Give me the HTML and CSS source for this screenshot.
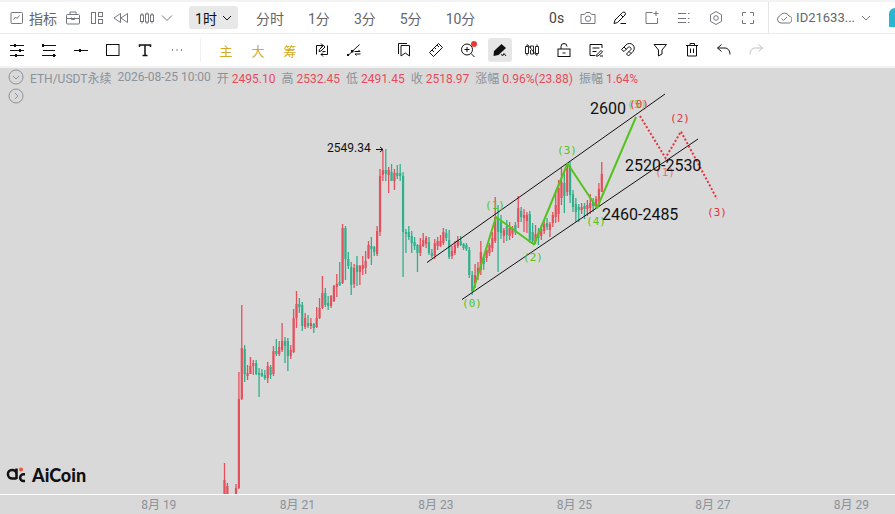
FILE: index.html
```html
<!DOCTYPE html>
<html lang="zh-CN">
<head>
<meta charset="utf-8">
<meta name="viewport" content="width=device-width, initial-scale=1">
<title>ETH/USDT永续 - AiCoin</title>
<link rel="stylesheet" href="styles.css">
</head>
<body>
<header class="bar top-bar">
  <button class="indicator"><svg class="icon grey" viewBox="0 0 16 16"><rect x="2" y="2.5" width="11.5" height="11" rx="1"/><path d="M4.5 9.5l2-2.500 1.500 1.500 2.500-3"/></svg>指标</button>
  <button class="cell small" aria-label="工具箱"><svg class="icon grey" viewBox="0 0 16 16"><rect x="1.500" y="4.500" width="13" height="9.500" rx="1"/><path d="M5 4.500v-2.500h6v2.500M1.500 8.500h13M6.500 7.500v2h3v-2"/></svg></button>
  <button class="cell small" aria-label="布局"><svg class="icon grey" viewBox="0 0 16 16"><rect x="2.500" y="2.500" width="4" height="11"/><rect x="9.500" y="2.500" width="4" height="4"/><rect x="9.500" y="9.500" width="4" height="4"/></svg></button>
  <button class="cell small" aria-label="回放"><svg class="icon grey" viewBox="0 0 16 16"><path d="M7.500 3.500v9L1 8zM14.500 3.500v9L8 8z"/></svg></button>
  <button class="cell candle-cell" aria-label="K线样式"><svg class="icon grey" viewBox="0 0 16 16"><rect x="1.500" y="5" width="3" height="6.500"/><rect x="6.500" y="4" width="3" height="8"/><rect x="11.500" y="5" width="3" height="6.500"/><path d="M3 3v2M3 11.500v2M8 2.500V4M8 12v2M13 3v2M13 11.500v2"/></svg></button>
  <button class="cell tiny" aria-label="更多样式"><svg class="icon grey" viewBox="0 0 16 16"><path d="M3 5.500l5 5 5-5"/></svg></button>
  <nav class="periods" aria-label="周期">
    <button class="period active">1时<svg class="chevron" viewBox="0 0 10 10"><path d="M1 3l4 4 4-4"/></svg></button>
    <button class="period">分时</button>
    <button class="period">1分</button>
    <button class="period">3分</button>
    <button class="period">5分</button>
    <button class="period">10分</button>
  </nav>
  <div class="actions">
    <span class="countdown">0s</span>
    <button class="cell" aria-label="截图"><svg class="icon grey" viewBox="0 0 16 16"><path d="M1 4.500h3.500L6 2.500h4l1.500 2H15v9H1z"/><circle cx="8" cy="8.700" r="2.700"/></svg></button>
    <button class="cell" aria-label="画线"><svg class="icon dark" viewBox="0 0 16 16"><path d="M2 13.500l1-3.500 7.500-7.500q1.500-1 2.500 0t0 2.500L5.500 12.500zM9 5l2 2M8.500 13.500h5.500"/></svg></button>
    <button class="cell" aria-label="新窗口"><svg class="icon grey" viewBox="0 0 16 16"><path d="M8.500 2.500h-6.500v11h11.500V8M12 1v5M9.500 3.500h5"/></svg></button>
    <button class="cell" aria-label="列表"><svg class="icon grey" viewBox="0 0 16 16"><path d="M2 3.500h8M2 8.500h8M2 12.500h8M12 3.500h1.500M12 8.500h1.500M12 12.500h1.500"/></svg></button>
    <button class="cell" aria-label="设置"><svg class="icon grey" viewBox="0 0 16 16"><path d="M8 1.500l5.500 3.200v6.600L8 14.500l-5.500-3.200V4.700z"/><circle cx="8" cy="8" r="2.300"/></svg></button>
    <button class="cell" aria-label="全屏"><svg class="icon grey" viewBox="0 0 16 16"><path d="M2.500 6V2.500H6M10 2.500h3.500V6M13.500 10v3.500H10M6 13.500H2.500V10"/></svg></button>
  </div>
  <div class="account">
    <button class="account-button"><svg class="icon grey" viewBox="0 0 16 16"><path d="M5 13a3.700 3.700 0 0 1-1-7.200A5 5 0 0 1 13 6a3.500 3.500 0 0 1-1.500 7zM5.500 8.500l2 2 3.500-3.500"/></svg>ID21633...<svg class="chevron grey" viewBox="0 0 10 10"><path d="M1 3l4 4 4-4"/></svg></button>
    <span class="avatar"></span>
  </div>
</header>

<div class="bar draw-bar">
  <div class="tools">
    <button class="cell" aria-label="平行线"><svg class="icon dark" viewBox="0 0 16 16"><path d="M1 3.500h14M1 8.500h14M1 13.500h14"/><path class="fill" d="M5 2h2v3H5zM10 7h2v3h-2zM6 12h2v3H6z"/></svg></button>
    <button class="cell" aria-label="水平线"><svg class="icon dark" viewBox="0 0 16 16"><path d="M1 3.500h14M2 8.500h12M1 13.500h14"/><path class="fill" d="M1 2h2v3H1zM12 12h2v3h-2z"/></svg></button>
    <button class="cell" aria-label="线段"><svg class="icon dark" viewBox="0 0 16 16"><path d="M1 8.500h14"/><path class="fill" d="M6 7h2v3H6z"/></svg></button>
    <button class="cell" aria-label="矩形"><svg class="icon dark" viewBox="0 0 16 16"><rect x="1.500" y="2.500" width="12.500" height="11"/></svg></button>
    <button class="cell" aria-label="文字"><svg class="icon dark bold" viewBox="0 0 16 16"><path d="M2.500 5V3h11v2M8 3v10.500M5.500 13.500h5"/></svg></button>
    <button class="cell" aria-label="更多工具"><svg class="icon dark" viewBox="0 0 16 16"><path class="fill" d="M3 7.500h1v1H3zM7.500 7.500h1v1h-1zM12 7.500h1v1h-1z"/></svg></button>
  </div>
  <div class="tools marks">
    <button class="cell gold">主</button>
    <button class="cell gold">大</button>
    <button class="cell gold">筹</button>
    <button class="cell" aria-label="自动画线"><svg class="icon dark" viewBox="0 0 16 16"><path d="M2.500 12.500V3.500H9M7 1.500l2 2-2 2M13.500 3.500v9H7M9 10.500l-2 2 2 2M5 9.500l.500-2 4-4 1.500 1.500-4 4zM8.500 9.500h3"/></svg></button>
    <button class="cell" aria-label="切换线段"><svg class="icon dark" viewBox="0 0 16 16"><path d="M2 13.500L13.500 2.500M8.500 9.500H14l-1.500-1.500M14.500 12H9l1.500 1.500"/><path class="fill" d="M1 12h2v2H1zM5 8h2.500v2.500H5z"/></svg></button>
  </div>
  <div class="tools">
    <button class="cell" aria-label="书签"><svg class="icon dark" viewBox="0 0 16 16"><path d="M5 3.500h8.500v10.500l-4.200-3-4.300 3zM2.500 12V1.500H11"/></svg></button>
    <button class="cell" aria-label="测量"><svg class="icon dark" viewBox="0 0 16 16"><path d="M1.500 10.500l9-9 4 4-9 9zM4 8l2 2M6.500 5.500l1.500 1.500M9 3l2 2"/></svg></button>
    <button class="cell alert" aria-label="放大"><svg class="icon dark" viewBox="0 0 16 16"><circle cx="7" cy="7.500" r="5.500"/><path d="M11 11.500l3.500 3.500M4.500 7.500h5M7 5v5"/></svg></button>
    <button class="cell selected" aria-label="画笔"><svg class="icon dark" viewBox="0 0 16 16"><path class="fill" d="M2 9l7.500-7L14 6l-7.500 7L1.500 14z"/><path d="M9 12.500l2 1 1-2 2 2.500"/></svg></button>
    <button class="cell" aria-label="隐藏K线"><svg class="icon dark thin" viewBox="0 0 16 16"><path d="M4.500 4.500h-3v7h3zM6.500 6V4h3v8h-3V8M11.500 4.500h3v7h-3zM3 2.500v2M3 11.500v2M13 2.500v2M13 11.500v2M3.500 2.500l9 11"/></svg></button>
    <button class="cell" aria-label="解锁"><svg class="icon dark" viewBox="0 0 16 16"><rect x="2" y="7" width="12" height="7.500"/><path d="M5 7V4.500a3 3 0 0 1 6 0M6.500 11h3"/></svg></button>
    <button class="cell" aria-label="画线管理"><svg class="icon dark" viewBox="0 0 16 16"><path d="M7 13.500H2v-11h12V6M4.500 6h7M4.500 9.500h4M8 13.500l5-5 1.500 1.500-4.500 4H8zM12 14h3"/></svg></button>
    <button class="cell" aria-label="磁吸"><svg class="icon dark" viewBox="0 0 16 16"><path d="M1.500 7.500l4.500-4.500a4.700 4.700 0 0 1 7 6.500l-4.500 4.500-2-2L11 7.500a2 2 0 0 0-2.500-2.500L4 9.500zM4 5l2.500 2.500M9 9.500l2 2"/></svg></button>
    <button class="cell" aria-label="筛选"><svg class="icon dark" viewBox="0 0 16 16"><path d="M2 2.500h12.500L10 8v4l-3.500 2V8z"/></svg></button>
    <button class="cell" aria-label="删除"><svg class="icon dark" viewBox="0 0 16 16"><path d="M2 3.500h12M6 3.500v-2h4.500v2M3.500 3.500v10.500h9V3.500M6.500 6.500v4.500M9.500 6.500v4.500"/></svg></button>
    <button class="cell" aria-label="撤销"><svg class="icon dark" viewBox="0 0 16 16"><path d="M5.500 2.500l-4 3.500 4 3.500M1.500 6H9c3 0 5 3 5 6.500"/></svg></button>
    <button class="cell" aria-label="重做"><svg class="icon pale" viewBox="0 0 16 16"><path d="M10.500 2.500l4 3.500-4 3.500M14.500 6H7c-3 0-5 3-5 6.500"/></svg></button>
  </div>
</div>

<main class="chart">
  <svg class="plot" viewBox="0 68 895 426" role="img" aria-label="ETH/USDT 1小时K线">
    <g id="candles"></g>
    <path class="trend" d="M427 262.500L665 94M462 299.500L698 139"/>
    <path class="wave" d="M473 291L496 217L534 244.500L567.500 163.500L597 208L636 117"/>
    <path class="forecast" d="M640 116L665.500 158L681 131.500L717 199"/>
    <path class="arrow" d="M376 149.500h7M380 147l3 2.500-3 2.500"/>
    <text class="peak" x="327" y="152">2549.34</text>
    <g class="count">
      <text x="472" y="307">(0)</text><text x="495" y="209">(1)</text><text x="533" y="261">(2)</text><text x="567" y="154">(3)</text><text x="596" y="225">(4)</text><text class="faint" x="637" y="108">(5)</text>
    </g>
    <g class="count next">
      <text x="639" y="108">(0)</text><text class="faint" x="665" y="176">(1)</text><text x="680" y="122">(2)</text><text x="717" y="216">(3)</text>
    </g>
    <g class="price">
      <text x="590" y="114">2600</text><text x="625" y="171">2520-2530</text><text x="602" y="220">2460-2485</text>
    </g>
  </svg>
  <div class="legend">
    <div class="legend-row">
      <button class="round" aria-label="收起"><svg viewBox="0 0 16 16"><circle cx="8" cy="8" r="7"/><path d="M5 7l3 3 3-3"/></svg></button>
      <span class="symbol">ETH/USDT永续</span><span class="time">2026-08-25 10:00</span>
      <span>开 <b>2495.10</b></span><span>高 <b>2532.45</b></span><span>低 <b>2491.45</b></span><span>收 <b>2518.97</b></span><span>涨幅 <b>0.96%(23.88)</b></span><span>振幅 <b>1.64%</b></span>
    </div>
    <button class="round" aria-label="展开"><svg viewBox="0 0 16 16"><circle cx="8" cy="8" r="7"/><path d="M7 5l3 3-3 3"/></svg></button>
  </div>
  <div class="brand">
    <svg class="brand-mark" viewBox="0 0 22 18"><path d="M10.500 2.500v10.500M10.500 8a4.300 4.300 0 1 0-4.300 4.500h4.300M19 8.300h-1.500a3.300 3.300 0 0 0 0 6.700H19"/><circle cx="15" cy="3.500" r="2"/></svg>
    <span>AiCoin</span>
  </div>
</main>
<footer class="axis">
  <span>8月 19</span><span>8月 21</span><span>8月 23</span><span>8月 25</span><span>8月 27</span><span>8月 29</span>
</footer>
<script src="chart.js"></script>
</body>
</html>
```
FILE: styles.css
```css
* {
  box-sizing: border-box;
}

body {
  margin: 0;
  min-height: 100vh;
  display: flex;
  flex-direction: column;
  background: #d9d9d9;
  color: #63666c;
  font-family: Roboto, "Noto Sans CJK SC", sans-serif;
  font-size: 14px;
  overflow-x: hidden;
}

button {
  flex: none;
  display: flex;
  align-items: center;
  justify-content: center;
  padding: 0;
  border: 0;
  background: none;
  color: inherit;
  font: inherit;
  white-space: nowrap;
}

svg {
  display: block;
  fill: none;
  stroke: currentColor;
}

.bar {
  display: flex;
  align-items: center;
  background: #fff;
  border-bottom: 1px solid #ededed;
}

.top-bar {
  height: 34px;
  border-top: 2px solid #f3f3f3;
  padding-left: 9px;
}

.draw-bar {
  height: 34px;
  padding-left: 1px;
  border-bottom: 2px solid #f3f3f3;
}

.icon {
  flex: none;
  width: 16px;
  height: 16px;
}

.grey {
  color: #74777c;
}

.dark {
  color: #111;
}

.pale {
  color: #c0c0c0;
}

.bold {
  stroke-width: 1.5;
}

.thin {
  stroke-width: 0.9;
}

.fill {
  fill: currentColor;
  stroke: none;
}

.indicator {
  width: 52px;
  gap: 4px;
  justify-content: flex-start;
}

.cell {
  width: 32px;
  height: 24px;
}

.small {
  width: 24px;
}

.candle-cell {
  width: 28px;
}

.tiny {
  width: 12px;
}

.chevron {
  width: 10px;
  height: 10px;
}

.periods {
  display: flex;
  align-items: center;
  gap: 24px;
  margin-left: 16px;
}

.active {
  width: 49px;
  height: 23px;
  gap: 5px;
  margin-right: -6px;
  border-radius: 3px;
  background: #e8e8e8;
  color: #111;
}

.actions {
  display: flex;
  align-items: center;
  margin-left: auto;
}

.countdown {
  margin-right: 8px;
  color: #444;
}

.account {
  display: flex;
  align-items: center;
  align-self: stretch;
  gap: 18px;
  margin-left: 4px;
  padding-left: 7px;
  border-left: 1px solid #e6e6e6;
}

.account-button {
  gap: 4px;
  font-size: 13px;
}

.account-button .chevron {
  margin-left: 2px;
}

.avatar {
  width: 6px;
  height: 19px;
  border-radius: 6px 0 0 0;
  background: #27b5d3;
}

.tools {
  display: flex;
}

.marks {
  margin: 0 18px 0 7px;
  padding-left: 9px;
  border-left: 1px solid #f0f0f0;
}

.gold {
  color: #d3aa22;
  font-size: 13px;
}

.selected {
  width: 24px;
  margin: 0 4px;
  border-radius: 3px;
  background: #e6e6e6;
}

.alert {
  position: relative;
}

.alert::after {
  content: "";
  position: absolute;
  top: 3px;
  right: 7px;
  width: 6px;
  height: 6px;
  border-radius: 50%;
  background: #e53935;
}

.chart {
  position: relative;
  flex: 1;
  display: flex;
  flex-direction: column;
}

.plot {
  width: 100%;
  flex: 1;
  stroke: none;
}

.up {
  fill: #e5505c;
}

.down {
  fill: #32af8c;
}

.trend,
.arrow {
  stroke: #111;
}

.wave {
  stroke: #55c31e;
  stroke-width: 2;
  stroke-linejoin: round;
}

.forecast {
  stroke: #e8323c;
  stroke-width: 2;
  stroke-dasharray: 2 2;
}

.peak {
  fill: #111;
  font-size: 12px;
}

.count {
  fill: #55c31e;
  font-family: "DejaVu Sans Mono", monospace;
  font-size: 11px;
  text-anchor: middle;
}

.next {
  fill: #e8323c;
}

.faint {
  opacity: 0.6;
}

.price {
  fill: #111;
  font-size: 16px;
}

.legend {
  position: absolute;
  top: 0;
  left: 8px;
  color: #8b9299;
  font-size: 12px;
}

.legend-row {
  display: flex;
  align-items: center;
  height: 18px;
  gap: 6px;
  white-space: nowrap;
}

.legend b {
  color: #e84a5c;
  font-weight: 400;
}

.round {
  width: 16px;
  height: 20px;
}

.round svg {
  width: 16px;
  height: 16px;
}

.brand {
  position: absolute;
  left: 6px;
  bottom: 9px;
  display: flex;
  align-items: center;
  gap: 4px;
  color: #111;
  font-family: Lato, sans-serif;
  font-size: 18px;
  font-weight: 900;
  line-height: 20px;
}

.brand-mark {
  width: 22px;
  height: 18px;
  stroke-width: 2.5;
}

.brand-mark circle {
  fill: #f0543c;
  stroke: none;
}

.axis {
  display: flex;
  height: 20px;
  padding-left: 10%;
  border-top: 1px solid #fff;
  overflow: hidden;
  color: #8b9299;
  font-size: 12px;
  line-height: 20px;
}

.axis span {
  flex: 0 0 17.2%;
  text-align: center;
}
```
FILE: chart.js
```js
// Each candle: direction, high, low, body top, body bottom, in plot units.
// A null entry is an hour that lies below the visible price range.
const candles = [
  ["up",463,494,480,494],["up",483,494,486,494],null,null,["up",484,494,488,494],
  ["up",372,489,399,488],["up",305,400,348,399],["down",345,382,349,374],["up",365,380,373,376],["up",357,374,366,374],
  ["up",360,375,363,366],["down",360,375,363,374],["down",368,397,373,375],["down",369,377,373,376],["down",370,380,375,378],
  ["up",362,383,366,378],["down",365,379,367,375],["up",346,376,351,374],["down",339,356,351,354],["up",341,356,347,354],
  ["up",323,352,341,350],["down",337,363,341,346],["down",338,371,341,356],["up",345,359,350,356],["up",309,353,318,352],
  ["up",291,328,304,318],["down",298,313,304,307],["down",302,331,305,326],["up",313,329,318,327],["down",315,328,323,326],
  ["up",318,329,323,326],["down",323,333,324,328],["up",307,328,318,327],["up",298,319,308,318],["up",276,309,293,308],
  ["down",288,307,293,305],["down",296,310,303,306],["up",295,308,296,306],["up",285,302,286,301],["up",274,297,284,287],
  ["down",262,286,282,285],["up",224,284,228,283],["down",226,280,228,259],["down",252,269,259,266],["down",262,295,267,285],
  ["up",264,288,268,284],["down",256,286,265,272],["up",265,285,266,272],["up",256,275,265,269],["up",251,274,261,268],
  ["up",241,259,245,258],["down",237,265,246,249],["down",246,256,247,252],["up",226,256,231,254],["up",169,236,176,232],
  ["up",150,181,170,175],["down",149,181,170,174],["up",167,193,170,175],["down",164,181,172,181],["up",169,190,173,181],
  ["down",165,179,173,176],["down",164,181,173,176],["down",172,277,176,232],["down",229,253,232,234],["down",226,240,232,237],
  ["down",231,253,236,243],["down",237,250,242,246],["down",244,272,245,253],["up",238,256,245,253],["up",233,247,240,246],
  ["up",236,248,238,244],["down",237,255,242,253],["down",249,258,253,256],["up",239,259,243,256],["up",237,250,241,246],
  ["up",235,247,241,246],["up",228,245,232,243],["down",229,241,233,238],["down",230,259,240,257],["up",246,259,251,256],
  ["up",241,255,245,253],["up",236,248,240,246],["down",236,246,241,245],["down",243,250,244,248],["down",243,251,245,249],
  ["down",247,278,250,275],["down",271,295,275,291],["up",264,288,275,283],["up",262,280,268,275],["up",241,275,252,270],
  ["down",255,270,258,264],["up",247,262,250,258],["up",243,256,245,253],["up",232,252,238,248],["up",197,243,217,241],
  ["down",205,272,218,232],["down",215,239,222,233],["up",228,243,230,236],["down",220,241,226,235],["up",222,240,228,236],
  ["up",226,238,229,234],["down",222,235,225,231],["up",196,228,208,222],["down",207,222,211,217],["up",209,232,215,218],
  ["up",212,233,215,221],["down",211,243,214,240],["down",223,243,232,241],["up",225,244,234,241],["down",228,245,233,238],
  ["up",225,240,229,236],["up",219,234,224,231],["down",218,230,223,227],["up",222,237,224,230],["up",212,227,215,223],
  ["up",190,223,205,217],["up",180,222,188,214],["up",168,205,182,198],["down",173,213,183,196],["up",163,196,166,192],
  ["down",162,203,166,195],["down",190,212,194,207],["down",198,222,204,212],["down",204,222,207,210],["up",203,214,207,210],
  ["down",203,219,206,209],["up",200,216,205,209],["up",194,214,203,208],["down",198,212,202,206],["up",196,208,199,206],
  ["up",183,206,189,201],["up",162,192,174,192]
];

const firstX = 224.5;
const stepX = 2.88;
const wickWidth = 1.3;
const bodyWidth = 2.2;
const layer = document.getElementById("candles");

function addBar(direction, x, width, top, bottom) {
  const bar = document.createElementNS("http://www.w3.org/2000/svg", "rect");
  bar.setAttribute("class", direction);
  bar.setAttribute("x", x - width / 2);
  bar.setAttribute("y", top);
  bar.setAttribute("width", width);
  bar.setAttribute("height", bottom - top);
  layer.append(bar);
}

candles.forEach((candle, index) => {
  if (!candle) return;
  const [direction, high, low, top, bottom] = candle;
  const x = firstX + index * stepX;
  addBar(direction, x, wickWidth, high, low);
  addBar(direction, x, bodyWidth, top, bottom);
});
```
